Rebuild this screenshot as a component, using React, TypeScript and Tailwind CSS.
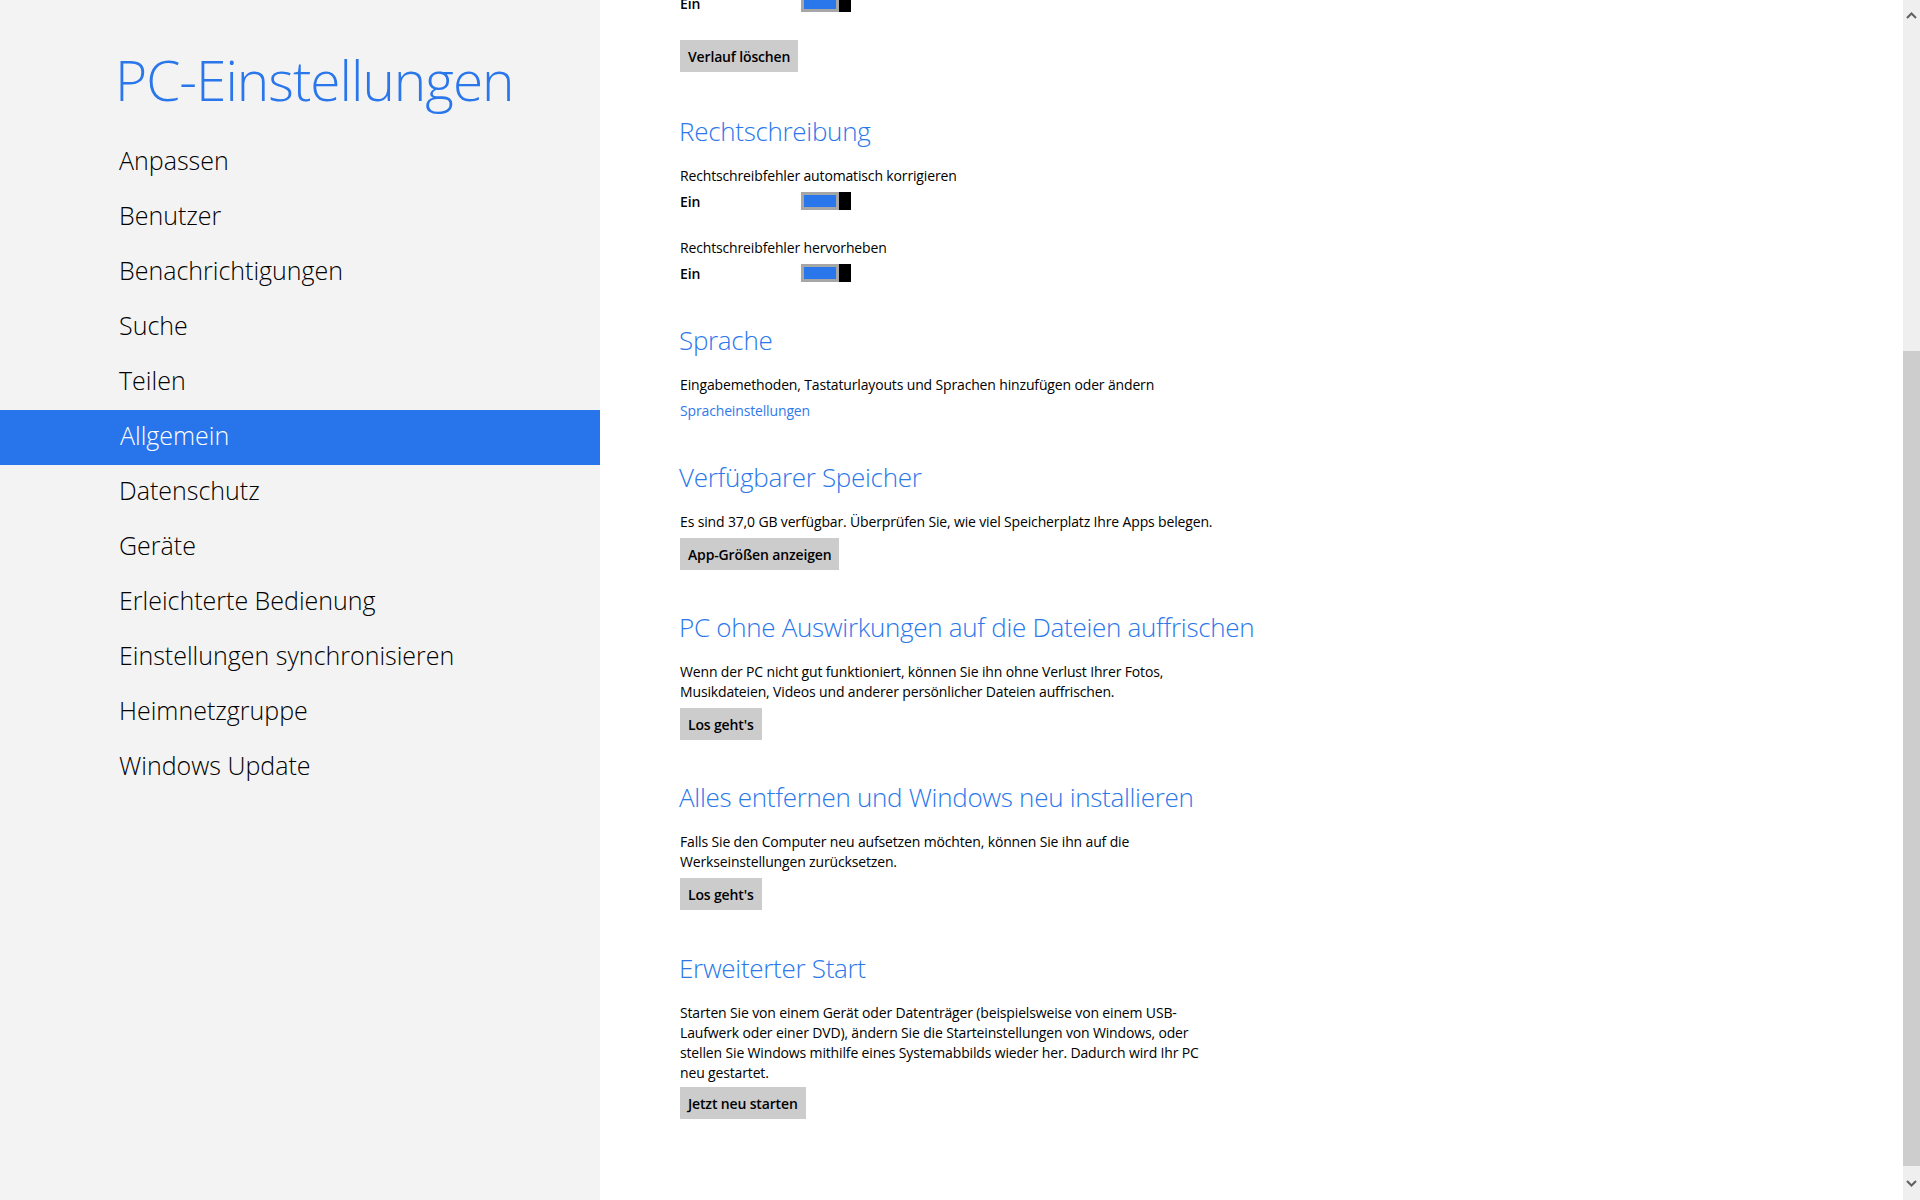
import React from "react";

const nav = [
  "Anpassen",
  "Benutzer",
  "Benachrichtigungen",
  "Suche",
  "Teilen",
  "Allgemein",
  "Datenschutz",
  "Geräte",
  "Erleichterte Bedienung",
  "Einstellungen synchronisieren",
  "Heimnetzgruppe",
  "Windows Update",
];

function Toggle() {
  return (
    <div className="flex h-[18px] w-[50px]">
      <div className="h-[18px] w-[38px] border-[3px] border-[#a6a6a6] bg-[#2a76eb]" />
      <div className="h-[18px] w-[12px] bg-black" />
    </div>
  );
}

function ToggleRow() {
  return (
    <div className="flex h-[18px] items-center">
      <span className="w-[121px] text-[14px] font-semibold tracking-[-0.1px] text-black">Ein</span>
      <Toggle />
    </div>
  );
}

function Btn({ children }: { children: React.ReactNode }) {
  return (
    <button className="flex h-[32px] items-center bg-[#cccccc] px-[8px] text-[14px] font-semibold tracking-[-0.15px] text-black">
      {children}
    </button>
  );
}

function Heading({ children }: { children: React.ReactNode }) {
  return (
    <h2 className="-ml-[1px] text-[26px] font-light leading-[36px] tracking-[-0.3px] text-[#2b78eb]">{children}</h2>
  );
}

function Text({ children, className = "" }: { children: React.ReactNode; className?: string }) {
  return <p className={"text-[14px] leading-[20px] tracking-[-0.15px] " + className}>{children}</p>;
}

export default function App() {
  return (
    <div className="flex h-[1200px] w-[1920px] overflow-hidden font-['Open_Sans','Noto_Sans',sans-serif] text-black">
      <aside className="w-[600px] shrink-0 bg-[#f3f3f3]">
        <h1 className="pl-[115px] pt-[42px] text-[55px] font-light leading-[76px] tracking-[-1px] text-[#2a76eb]">
          PC-Einstellungen
        </h1>
        <nav className="mt-[17px] flex flex-col">
          {nav.map((n) => (
            <div
              key={n}
              className={
                n === "Allgemein"
                  ? "flex h-[55px] items-center bg-[#2874ea] pb-[3px] pl-[120px] text-[25px] font-light text-white"
                  : "flex h-[55px] items-center pb-[3px] pl-[119px] text-[25px] font-light text-black"
              }
            >
              {n}
            </div>
          ))}
        </nav>
      </aside>

      <main className="flex flex-1 bg-white">
        <div className="flex-1 pl-[80px]">
          <div className="-mt-[6px]">
            <ToggleRow />
          </div>
          <div className="mt-[28px]">
            <Btn>Verlauf löschen</Btn>
          </div>

          <div className="mt-[41px]">
            <Heading>Rechtschreibung</Heading>
          </div>
          <Text className="mt-[17px]">Rechtschreibfehler automatisch korrigieren</Text>
          <div className="mt-[6px]">
            <ToggleRow />
          </div>
          <Text className="mt-[28px]">Rechtschreibfehler hervorheben</Text>
          <div className="mt-[6px]">
            <ToggleRow />
          </div>

          <div className="mt-[40px]">
            <Heading>Sprache</Heading>
          </div>
          <Text className="mt-[17px]">Eingabemethoden, Tastaturlayouts und Sprachen hinzufügen oder ändern</Text>
          <Text className="mt-[6px] text-[#3079ec]">Spracheinstellungen</Text>

          <div className="mt-[38px]">
            <Heading>Verfügbarer Speicher</Heading>
          </div>
          <Text className="mt-[17px]">
            Es sind 37,0 GB verfügbar. Überprüfen Sie, wie viel Speicherplatz Ihre Apps belegen.
          </Text>
          <div className="mt-[6px]">
            <Btn>App-Größen anzeigen</Btn>
          </div>

          <div className="mt-[39px]">
            <Heading>PC ohne Auswirkungen auf die Dateien auffrischen</Heading>
          </div>
          <Text className="mt-[17px]">
            <span className="block">Wenn der PC nicht gut funktioniert, können Sie ihn ohne Verlust Ihrer Fotos,</span>
            <span className="block">Musikdateien, Videos und anderer persönlicher Dateien auffrischen.</span>
          </Text>
          <div className="mt-[6px]">
            <Btn>Los geht's</Btn>
          </div>

          <div className="mt-[39px]">
            <Heading>Alles entfernen und Windows neu installieren</Heading>
          </div>
          <Text className="mt-[17px]">
            <span className="block">Falls Sie den Computer neu aufsetzen möchten, können Sie ihn auf die</span>
            <span className="block">Werkseinstellungen zurücksetzen.</span>
          </Text>
          <div className="mt-[6px]">
            <Btn>Los geht's</Btn>
          </div>

          <div className="mt-[40px]">
            <Heading>Erweiterter Start</Heading>
          </div>
          <Text className="mt-[17px]">
            <span className="block">Starten Sie von einem Gerät oder Datenträger (beispielsweise von einem USB-</span>
            <span className="block">Laufwerk oder einer DVD), ändern Sie die Starteinstellungen von Windows, oder</span>
            <span className="block">stellen Sie Windows mithilfe eines Systemabbilds wieder her. Dadurch wird Ihr PC</span>
            <span className="block">neu gestartet.</span>
          </Text>
          <div className="mt-[4px]">
            <Btn>Jetzt neu starten</Btn>
          </div>
        </div>

        <div className="flex w-[17px] shrink-0 flex-col bg-[#efefef]">
          <div className="flex h-[30px] items-center justify-center">
            <svg width="11" height="7" viewBox="0 0 11 7">
              <path d="M1 6 L5.5 1.5 L10 6" fill="none" stroke="#606060" strokeWidth="2" />
            </svg>
          </div>
          <div className="mt-[321px] h-[815px] bg-[#cdcdcd]" />
          <div className="flex h-[34px] items-center justify-center">
            <svg width="11" height="7" viewBox="0 0 11 7">
              <path d="M1 1 L5.5 5.5 L10 1" fill="none" stroke="#606060" strokeWidth="2" />
            </svg>
          </div>
        </div>
      </main>
    </div>
  );
}
